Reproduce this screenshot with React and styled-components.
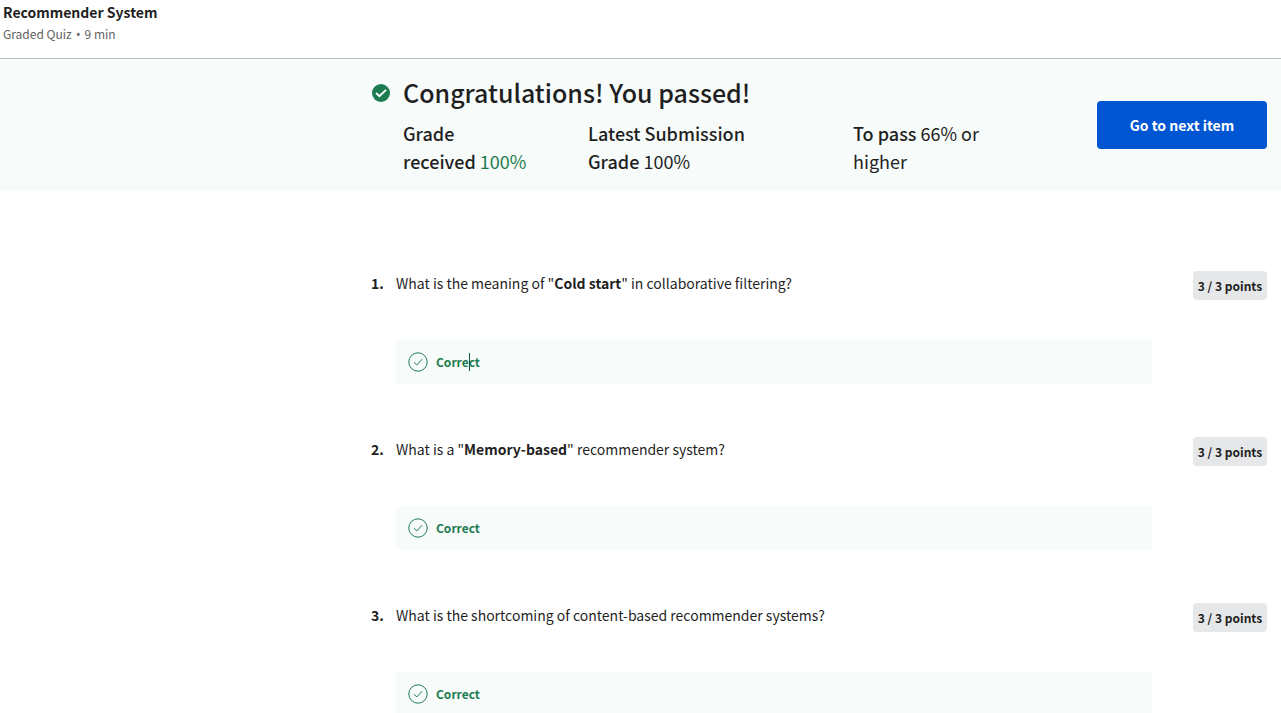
import React from "react";
import styled, { createGlobalStyle } from "styled-components";

const GlobalStyle = createGlobalStyle`
  *, *::before, *::after { box-sizing: border-box; }
  body {
    margin: 0;
    background: #fff;
    color: #1f1f1f;
    font-family: "Noto Sans CJK SC", "Noto Sans", sans-serif;
    font-size: 14px;
  }
  h1, h2, p, ol { margin: 0; padding: 0; }
`;

const Page = styled.div`
  height: 100vh;
  overflow: hidden;
`;

const Header = styled.header`
  padding: 1px 3px 14px;
  border-bottom: 1px solid #bdbdbd;
`;

const QuizTitle = styled.h1`
  font-size: 14px;
  font-weight: 700;
  line-height: 22px;
`;

const QuizMeta = styled.p`
  font-size: 12px;
  line-height: 21px;
  color: #636363;
`;

const Separator = styled.span`
  padding: 0 1px;
  font-family: "Noto Sans", sans-serif;
  line-height: 1;
`;

const Banner = styled.section`
  display: flex;
  align-items: center;
  justify-content: space-between;
  padding: 16px 14px 16px 372px;
  background: #f7fbfa;
`;

const Result = styled.div`
  display: grid;
  grid-template-columns: 18px 1fr;
  column-gap: 13px;
  row-gap: 8px;
  align-items: center;
`;

const ResultTitle = styled.h2`
  padding-bottom: 2px;
  font-size: 25px;
  font-weight: 500;
  line-height: 34px;
`;

const Stats = styled.div`
  grid-column: 2;
  display: grid;
  grid-template-columns: 125px 205px 140px;
  column-gap: 60px;
`;

const Stat = styled.p`
  font-size: 18px;
  line-height: 28px;
`;

const StatLabel = styled.strong`
  font-weight: 500;
`;

const StatValue = styled.span`
  color: ${(p) => (p.$passed ? "#1d7c50" : "inherit")};
`;

const NextButton = styled.button`
  flex: none;
  width: 170px;
  height: 48px;
  border: 0;
  border-radius: 4px;
  background: #0056d2;
  color: #fff;
  font: inherit;
  font-weight: 700;
`;

const QuestionList = styled.ol`
  display: grid;
  gap: 53px;
  padding: 80px 14px 48px 371px;
  list-style: none;
`;

const Question = styled.li`
  display: grid;
  grid-template-columns: 25px 1fr 74px;
  row-gap: 40px;
`;

const QuestionNumber = styled.span`
  font-weight: 700;
  line-height: 24px;
`;

const Prompt = styled.p`
  line-height: 24px;
`;

const Points = styled.span`
  height: 29px;
  border-radius: 4px;
  background: #e5e7e8;
  font-size: 12px;
  font-weight: 700;
  line-height: 29px;
  text-align: center;
  white-space: nowrap;
`;

const Feedback = styled.div`
  grid-column: 2;
  display: flex;
  align-items: center;
  gap: 8px;
  height: 44px;
  margin-right: 41px;
  padding: 0 12px;
  background: #f7fbfa;
  color: #1d7c50;
  font-size: 12px;
  font-weight: 700;
  line-height: 18px;
`;

const FeedbackText = styled.span`
  position: relative;
`;

const Caret = styled.span`
  position: absolute;
  top: 0;
  bottom: 0;
  left: 33px;
  width: 1px;
  background: #14573a;
`;

const PassedIcon = () => (
  <svg width="18" height="18" viewBox="0 0 18 18" aria-hidden="true">
    <circle cx="9" cy="9" r="9" fill="#1d7c50" />
    <path d="M4.1 9.1 7.4 12.2 14 5.9" fill="none" stroke="#fff" strokeWidth="2" />
  </svg>
);

const CorrectIcon = () => (
  <svg width="20" height="20" viewBox="0 0 20 20" fill="none" stroke="#1d7c50" aria-hidden="true">
    <circle cx="10" cy="10" r="9.2" />
    <path d="M6 10.2 8.8 13 14 7.2" />
  </svg>
);

const questions = [
  {
    prompt: (
      <>
        What is the meaning of "<b>Cold start</b>" in collaborative filtering?
      </>
    ),
    caret: true,
  },
  {
    prompt: (
      <>
        What is a "<b>Memory-based</b>" recommender system?
      </>
    ),
  },
  { prompt: "What is the shortcoming of content-based recommender systems?" },
];

export default function App() {
  return (
    <Page>
      <GlobalStyle />
      <Header>
        <QuizTitle>Recommender System</QuizTitle>
        <QuizMeta>
          Graded Quiz<Separator> • </Separator>9 min
        </QuizMeta>
      </Header>
      <main>
        <Banner>
          <Result>
            <PassedIcon />
            <ResultTitle>Congratulations! You passed!</ResultTitle>
            <Stats>
              <Stat>
                <StatLabel>Grade received</StatLabel> <StatValue $passed>100%</StatValue>
              </Stat>
              <Stat>
                <StatLabel>Latest Submission Grade</StatLabel> <StatValue>100%</StatValue>
              </Stat>
              <Stat>
                <StatLabel>To pass</StatLabel> <StatValue>66% or higher</StatValue>
              </Stat>
            </Stats>
          </Result>
          <NextButton type="button">Go to next item</NextButton>
        </Banner>
        <QuestionList>
          {questions.map((q, i) => (
            <Question key={i}>
              <QuestionNumber>{i + 1}.</QuestionNumber>
              <Prompt>{q.prompt}</Prompt>
              <Points>3 / 3 points</Points>
              <Feedback>
                <CorrectIcon />
                <FeedbackText>
                  Correct
                  {q.caret && <Caret />}
                </FeedbackText>
              </Feedback>
            </Question>
          ))}
        </QuestionList>
      </main>
    </Page>
  );
}
